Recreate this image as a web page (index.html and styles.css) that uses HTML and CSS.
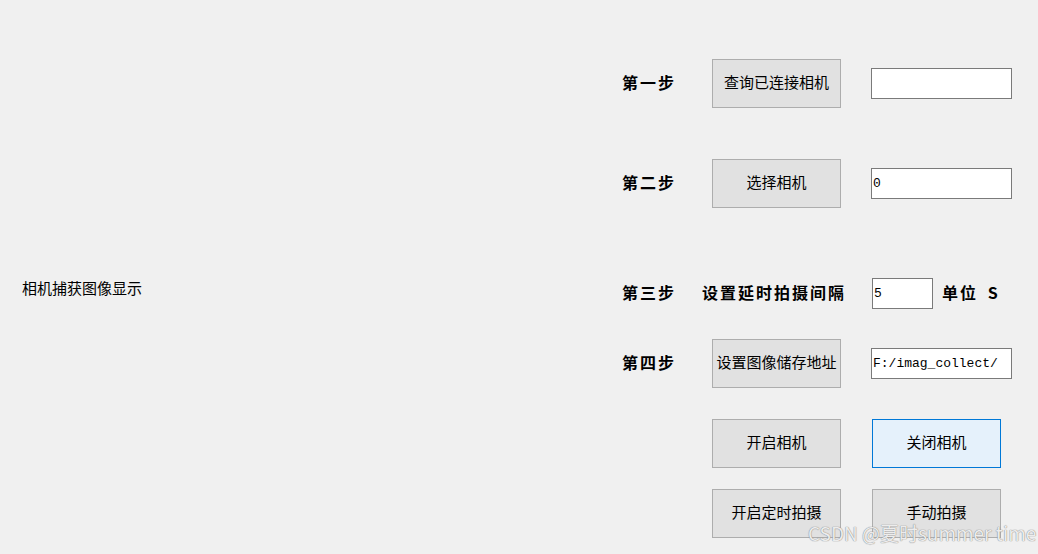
FILE: index.html
```html
<!DOCTYPE html>
<html lang="zh-CN">
<head>
<meta charset="UTF-8">
<title>相机采集</title>
<link rel="stylesheet" href="styles.css">
</head>
<body>
    <div class="window">
        <div class="preview">
            <span class="preview-label">相机捕获图像显示</span>
        </div>
        <div class="panel">
            <div class="row row-first">
                <span class="step">第一步</span>
                <button class="btn">查询已连接相机</button>
                <input type="text" class="field" readonly>
            </div>
            <div class="row row-second">
                <span class="step">第二步</span>
                <button class="btn">选择相机</button>
                <input type="text" class="field" value="0">
            </div>
            <div class="row row-third">
                <span class="step step-short">第三步</span>
                <span class="step step-long">设置延时拍摄间隔</span>
                <input type="text" class="field field-small" value="5">
                <span class="step unit">单位 S</span>
            </div>
            <div class="row row-fourth">
                <span class="step">第四步</span>
                <button class="btn">设置图像储存地址</button>
                <input type="text" class="field" value="F:/imag_collect/">
            </div>
            <div class="row row-actions">
                <button class="btn">开启相机</button>
                <button class="btn btn-focus">关闭相机</button>
            </div>
            <div class="row row-actions row-last">
                <button class="btn">开启定时拍摄</button>
                <button class="btn">手动拍摄</button>
            </div>
        </div>
        <div class="watermark">CSDN @夏时summer time</div>
    </div>
</body>
</html>
```

FILE: styles.css
```css
* {
    box-sizing: border-box;
}

body {
    margin: 0;
    background-color: #f0f0f0;
    font-family: "Noto Sans CJK SC", "Noto Sans", sans-serif;
    color: #000;
}

.window {
    position: relative;
    display: flex;
    width: 1038px;
    height: 554px;
    overflow: hidden;
}

.preview {
    width: 622px;
    padding-top: 275px;
    padding-left: 22px;
}
.preview-label {
    font-size: 15px;
    line-height: 22px;
}

.panel {
    display: flex;
    flex-direction: column;
    padding-top: 59px;
}

.row {
    display: flex;
    align-items: center;
    height: 49px;
}
.row-second {
    margin-top: 51px;
}
.row-third {
    margin-top: 61px;
}
.row-fourth {
    margin-top: 21px;
}
.row-actions {
    margin-top: 31px;
    padding-left: 90px;
    gap: 31px;
}
.row-last {
    margin-top: 21px;
}

.step {
    width: 90px;
    margin-bottom: 3px;
    font-size: 16px;
    font-weight: bold;
    letter-spacing: 2px;
    white-space: nowrap;
}
.step-short {
    width: 80px;
}
.step-long {
    width: 170px;
}
.unit {
    width: auto;
    margin-left: 9px;
    word-spacing: 4px;
}

.btn {
    width: 129px;
    height: 49px;
    padding: 0 0 4px;
    background-color: #e1e1e1;
    border: 1px solid #adadad;
    border-radius: 0;
    font-family: "Noto Sans CJK SC", sans-serif;
    font-size: 15px;
    color: #000;
}
.btn-focus {
    background-color: #e5f1fb;
    border-color: #0078d7;
}

.field {
    width: 141px;
    height: 31px;
    margin-left: 30px;
    padding: 0 1px;
    background: #fff;
    border: 1px solid #7a7a7a;
    border-radius: 0;
    font-family: "Liberation Mono", monospace;
    font-size: 13px;
    color: #000;
    outline: none;
}
.field-small {
    width: 61px;
    margin-left: 0;
}

.watermark {
    position: absolute;
    left: 808px;
    top: 521px;
    font-family: "Noto Sans CJK SC", sans-serif;
    font-size: 19px;
    line-height: 24px;
    color: rgba(255, 255, 255, 0.85);
    text-shadow: 0 0 1px #8a8a8a, 0 0 1px #8a8a8a;
    white-space: nowrap;
}
```
